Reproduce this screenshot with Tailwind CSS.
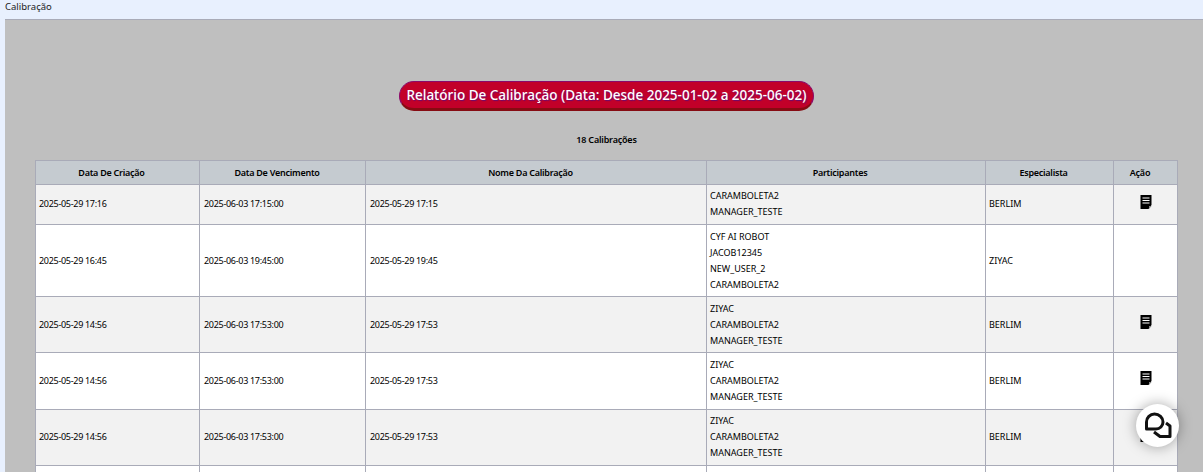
<!DOCTYPE html>
<html lang="pt">
<head>
<meta charset="utf-8">
<script src="https://cdn.jsdelivr.net/npm/@tailwindcss/browser@4"></script>
</head>
<body class="h-[472px] overflow-hidden bg-[#e8f0fe] font-['Noto_Sans',sans-serif] text-[9px] text-black relative">
<div class="h-[19px] pl-[5px] text-[#222] text-[9.5px] leading-[13px]">Calibração</div>
<main class="ml-[5px] h-[453px] overflow-hidden bg-[#bfbfbf] border-t border-[#a9abb8] pl-[30px] pr-[25px]">
  <div class="flex justify-center pt-[61px]">
    <h1 class="h-[30px] w-[415px] whitespace-nowrap flex items-center justify-center rounded-[15px] bg-[#c20029] border border-[#8a0a6a] border-b-[3px] border-b-[#860b12] text-[13.5px] font-medium text-white [text-shadow:1px_1px_1px_#6a0a70]">Relatório De Calibração (Data: Desde 2025-01-02 a 2025-06-02)</h1>
  </div>
  <p class="mt-[22px] h-[27px] text-center font-semibold leading-[14px] tracking-[-0.2px]">18 Calibrações</p>
  <table class="table-fixed border-collapse w-[1142px] leading-[16px]">
    <colgroup>
      <col class="w-[164px]"><col class="w-[166px]"><col class="w-[341px]"><col class="w-[279px]"><col class="w-[128px]"><col class="w-[64px]">
    </colgroup>
    <thead>
      <tr class="h-[24px] bg-[#c5cbd0] text-center tracking-[-0.25px]">
        <th class="border border-[#a9abb8] font-semibold pr-[12px]">Data De Criação</th>
        <th class="border border-[#a9abb8] font-semibold pr-[11px]">Data De Vencimento</th>
        <th class="border border-[#a9abb8] font-semibold pr-[11px]">Nome Da Calibração</th>
        <th class="border border-[#a9abb8] font-semibold pr-[12px]">Participantes</th>
        <th class="border border-[#a9abb8] font-semibold pr-[12px]">Especialista</th>
        <th class="border border-[#a9abb8] font-semibold pr-[11px]">Ação</th>
      </tr>
    </thead>
    <tbody>
      <tr class="h-[40px] bg-[#f2f2f2] [&>td]:pb-[2px]">
        <td class="border border-[#a9abb8] px-[3px] tracking-[-0.3px]">2025-05-29 17:16</td>
        <td class="border border-[#a9abb8] px-[4px] tracking-[-0.3px]">2025-06-03 17:15:00</td>
        <td class="border border-[#a9abb8] px-[4px] tracking-[-0.3px]">2025-05-29 17:15</td>
        <td class="border border-[#a9abb8] px-[3px]">CARAMBOLETA2<br>MANAGER_TESTE</td>
        <td class="border border-[#a9abb8] px-[3px]">BERLIM</td>
        <td class="border border-[#a9abb8] text-center"><svg class="inline-block align-middle w-[12px] h-[14px] mb-[4px]" viewBox="0 0 12 14"><path d="M0.5 0H11.5V10L8.5 14H0.5Z" fill="#000"/><path d="M2.5 3H9.5M2.5 5.5H9.5M2.5 8H9.5" stroke="#fff" stroke-width="1.2"/><path d="M9 11H11.5L9 14Z" fill="#888"/></svg></td>
      </tr>
      <tr class="h-[72px] bg-white">
        <td class="border border-[#a9abb8] px-[3px] tracking-[-0.3px]">2025-05-29 16:45</td>
        <td class="border border-[#a9abb8] px-[4px] tracking-[-0.3px]">2025-06-03 19:45:00</td>
        <td class="border border-[#a9abb8] px-[4px] tracking-[-0.3px]">2025-05-29 19:45</td>
        <td class="border border-[#a9abb8] px-[3px]">CYF AI ROBOT<br>JACOB12345<br>NEW_USER_2<br>CARAMBOLETA2</td>
        <td class="border border-[#a9abb8] px-[3px]">ZIYAC</td>
        <td class="border border-[#a9abb8]"></td>
      </tr>
      <tr class="h-[56px] bg-[#f2f2f2]">
        <td class="border border-[#a9abb8] px-[3px] tracking-[-0.3px]">2025-05-29 14:56</td>
        <td class="border border-[#a9abb8] px-[4px] tracking-[-0.3px]">2025-06-03 17:53:00</td>
        <td class="border border-[#a9abb8] px-[4px] tracking-[-0.3px]">2025-05-29 17:53</td>
        <td class="border border-[#a9abb8] px-[3px]">ZIYAC<br>CARAMBOLETA2<br>MANAGER_TESTE</td>
        <td class="border border-[#a9abb8] px-[3px]">BERLIM</td>
        <td class="border border-[#a9abb8] text-center"><svg class="inline-block align-middle w-[12px] h-[14px] mb-[6px]" viewBox="0 0 12 14"><path d="M0.5 0H11.5V10L8.5 14H0.5Z" fill="#000"/><path d="M2.5 3H9.5M2.5 5.5H9.5M2.5 8H9.5" stroke="#fff" stroke-width="1.2"/><path d="M9 11H11.5L9 14Z" fill="#888"/></svg></td>
      </tr>
      <tr class="h-[57px] bg-white">
        <td class="border border-[#a9abb8] px-[3px] tracking-[-0.3px]">2025-05-29 14:56</td>
        <td class="border border-[#a9abb8] px-[4px] tracking-[-0.3px]">2025-06-03 17:53:00</td>
        <td class="border border-[#a9abb8] px-[4px] tracking-[-0.3px]">2025-05-29 17:53</td>
        <td class="border border-[#a9abb8] px-[3px]">ZIYAC<br>CARAMBOLETA2<br>MANAGER_TESTE</td>
        <td class="border border-[#a9abb8] px-[3px]">BERLIM</td>
        <td class="border border-[#a9abb8] text-center"><svg class="inline-block align-middle w-[12px] h-[14px] mb-[6px]" viewBox="0 0 12 14"><path d="M0.5 0H11.5V10L8.5 14H0.5Z" fill="#000"/><path d="M2.5 3H9.5M2.5 5.5H9.5M2.5 8H9.5" stroke="#fff" stroke-width="1.2"/><path d="M9 11H11.5L9 14Z" fill="#888"/></svg></td>
      </tr>
      <tr class="h-[56px] bg-[#f2f2f2] [&>td]:pb-[2px]">
        <td class="border border-[#a9abb8] px-[3px] tracking-[-0.3px]">2025-05-29 14:56</td>
        <td class="border border-[#a9abb8] px-[4px] tracking-[-0.3px]">2025-06-03 17:53:00</td>
        <td class="border border-[#a9abb8] px-[4px] tracking-[-0.3px]">2025-05-29 17:53</td>
        <td class="border border-[#a9abb8] px-[3px]">ZIYAC<br>CARAMBOLETA2<br>MANAGER_TESTE</td>
        <td class="border border-[#a9abb8] px-[3px]">BERLIM</td>
        <td class="border border-[#a9abb8] text-center"><svg class="inline-block align-middle w-[12px] h-[14px] mb-[4px]" viewBox="0 0 12 14"><path d="M0.5 0H11.5V10L8.5 14H0.5Z" fill="#000"/><path d="M2.5 3H9.5M2.5 5.5H9.5M2.5 8H9.5" stroke="#fff" stroke-width="1.2"/><path d="M9 11H11.5L9 14Z" fill="#888"/></svg></td>
      </tr>
      <tr class="h-[56px] bg-white">
        <td class="border border-[#a9abb8]"></td><td class="border border-[#a9abb8]"></td><td class="border border-[#a9abb8]"></td><td class="border border-[#a9abb8]"></td><td class="border border-[#a9abb8]"></td><td class="border border-[#a9abb8]"></td>
      </tr>
    </tbody>
  </table>
</main>
<button class="absolute left-[1136px] top-[404px] w-[43px] h-[43px] rounded-full bg-white shadow-[0_0_14px_rgba(0,0,0,0.35)]">
  <svg class="w-[43px] h-[43px]" viewBox="0 0 43 43" fill="none" stroke="#111" stroke-width="3" stroke-linejoin="round"><path d="M10.500 25V18a8 8 0 0 1 8-8a8.500 8 0 0 1 8.500 8a7 7 0 0 1-7 7Z"/><path d="M30 19L34 22V32.500H24L18 28"/></svg>
</button>
</body>
</html>
